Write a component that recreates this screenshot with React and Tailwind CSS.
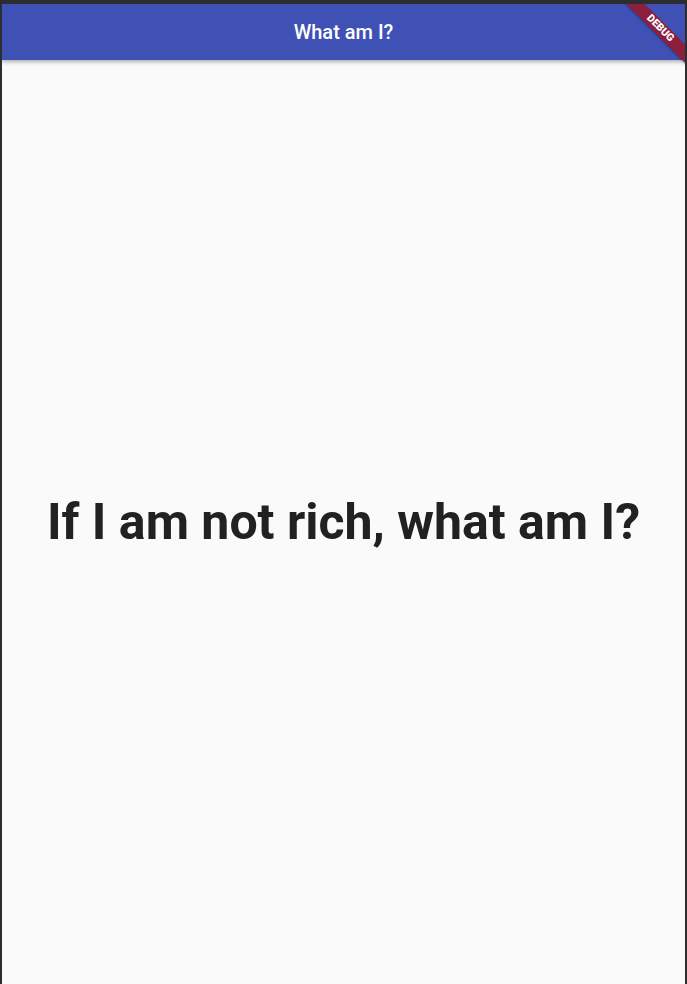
export default function App() {
  return (
    <div className="w-[687px] h-[984px] bg-[#2b2d31] pt-[4px] px-[2px] overflow-hidden" style={{ fontFamily: 'Roboto, "Liberation Sans", sans-serif' }}>
      <div className="relative w-full h-full bg-[#fafafa] flex flex-col overflow-hidden">
        <header className="h-[56px] shrink-0 bg-[#3f51b5] flex items-center justify-center shadow-[0_2px_4px_rgba(0,0,0,0.3)] z-10">
          <h1 className="text-[20px] font-medium text-white">What am I?</h1>
        </header>
        <main className="flex-1 flex items-center justify-center">
          <p className="text-[50px] font-bold text-[#212121] leading-none">If I am not rich, what am I?</p>
        </main>
        <div className="absolute top-0 right-0 w-[80px] h-[80px] overflow-hidden pointer-events-none z-20">
          <div className="absolute top-[18px] right-[-35px] w-[120px] h-[13px] bg-[#8c1f3e] rotate-45 flex items-center justify-center shadow-[0_1px_2px_rgba(0,0,0,0.3)]">
            <span className="text-[10.5px] font-black text-white leading-none">DEBUG</span>
          </div>
        </div>
      </div>
    </div>
  );
}
